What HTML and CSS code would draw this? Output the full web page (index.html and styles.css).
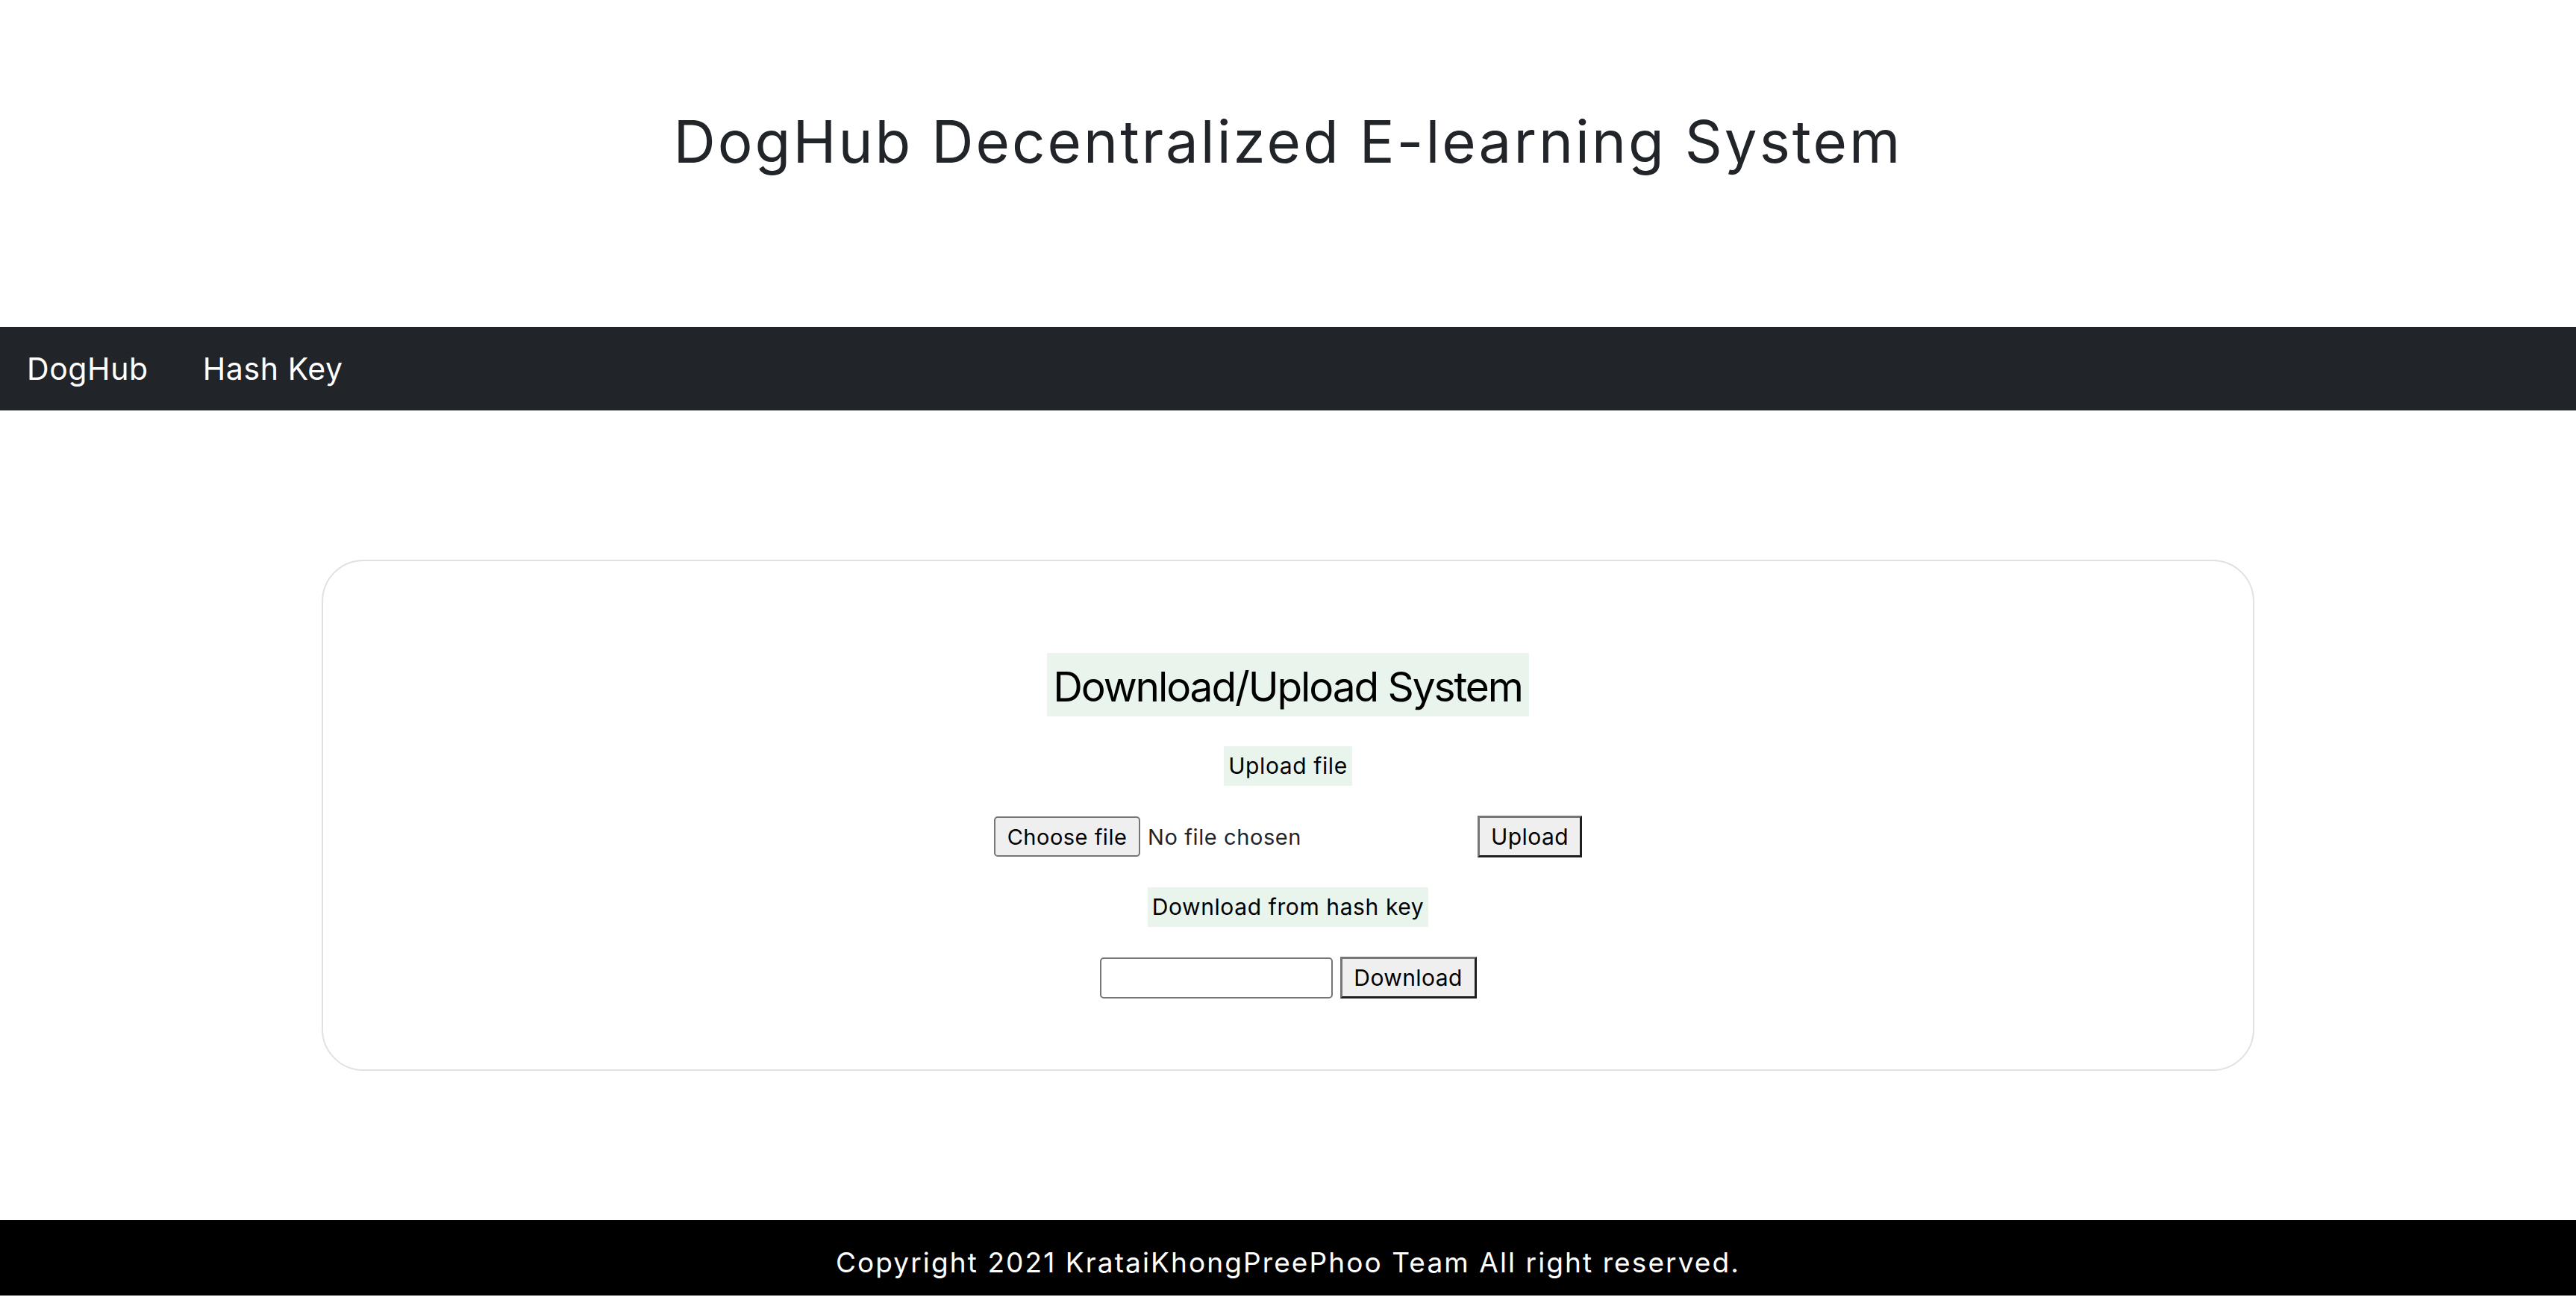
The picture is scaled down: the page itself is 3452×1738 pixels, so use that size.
FILE: index.html
```html
<!DOCTYPE html>
<html lang="en">
<head>
<meta charset="utf-8">
<title>DogHub Decentralized E-learning System</title>
<link rel="stylesheet" href="styles.css">
</head>
<body>
<header class="site-header">
  <h1 class="site-title">DogHub Decentralized E-learning System</h1>
</header>
<nav class="navbar">
  <a class="nav-brand" href="#">DogHub</a>
  <a class="nav-link" href="#">Hash Key</a>
</nav>
<main class="main">
  <section class="card">
    <h2 class="card-title">Download/Upload System</h2>
    <p class="field-label">Upload file</p>
    <div class="upload-row">
      <div class="file-picker">
        <button class="file-btn" type="button">Choose file</button>
        <span class="file-name">No file chosen</span>
      </div>
      <button class="btn-outset btn-upload" type="button">Upload</button>
    </div>
    <p class="field-label">Download from hash key</p>
    <div class="download-row">
      <input class="hash-input" type="text" aria-label="hash key">
      <button class="btn-outset btn-download" type="button">Download</button>
    </div>
  </section>
</main>
<footer class="footer">
  <p class="footer-text">Copyright 2021 KrataiKhongPreePhoo Team All right reserved.</p>
</footer>
</body>
</html>
```
FILE: styles.css
```css
* { box-sizing: border-box; }
html, body { margin: 0; padding: 0; }
body {
  font-family: "Inter", "Noto Sans", sans-serif;
  color: #212529;
  background: #fff;
  width: 3452px;
}
.site-header {
  height: 438px;
  padding-top: 142px;
}
.site-title {
  margin: 0;
  text-align: center;
  font-weight: 400;
  font-size: 78px;
  line-height: 96px;
  letter-spacing: 3px;
  color: #212529;
}
.navbar {
  height: 112px;
  background: #212529;
  display: flex;
  align-items: center;
  padding-left: 36px;
  gap: 73px;
}
.nav-brand, .nav-link {
  color: #fff;
  text-decoration: none;
  font-size: 41px;
  line-height: 60px;
  letter-spacing: 0.6px;
}
.main {
  padding: 200px 0;
}
.card {
  width: 2590px;
  margin: 0 auto;
  border: 2px solid #dee2e6;
  border-radius: 56px;
  padding: 123px 0 95px;
  display: flex;
  flex-direction: column;
  align-items: center;
  gap: 40px;
}
.card-title {
  margin: 0;
  font-weight: 400;
  font-size: 55px;
  line-height: 80px;
  letter-spacing: -2.1px;
  padding: 5px 9px 0 8px;
  background: #e8f4ec;
  color: #000;
}
.field-label {
  margin: 0;
  font-size: 30px;
  line-height: 53px;
  letter-spacing: 0.6px;
  padding: 0 6px;
  background: #e8f4ec;
  color: #000;
}
.upload-row, .download-row {
  display: flex;
  align-items: center;
  justify-content: center;
}
.file-picker {
  width: 640px;
  display: flex;
  align-items: center;
}
.file-btn {
  width: 196px;
  height: 54px;
  border: 2px solid #767676;
  border-radius: 5px;
  background: #efefef;
  font-family: inherit;
  font-size: 29px;
  letter-spacing: 0.5px;
  color: #000;
  padding: 0;
}
.file-name {
  margin-left: 10px;
  font-size: 29px;
  letter-spacing: 0.6px;
  color: #212529;
}
.btn-outset {
  height: 56px;
  border-width: 3px;
  border-style: solid;
  border-color: #767676 #1e1e1e #1e1e1e #767676;
  background: #efefef;
  font-family: inherit;
  font-size: 30px;
  letter-spacing: 0.4px;
  color: #000;
  padding: 0;
}
.btn-upload {
  width: 140px;
  margin-left: 8px;
}
.hash-input {
  width: 312px;
  height: 55px;
  border: 2px solid #767676;
  border-radius: 5px;
  background: #fff;
  font-family: inherit;
  font-size: 30px;
}
.btn-download {
  width: 183px;
  margin-left: 10px;
}
.footer {
  background: #000;
  height: 101px;
  padding-top: 12px;
  display: flex;
  align-items: center;
  justify-content: center;
}
.footer-text {
  margin: 0;
  color: #fff;
  font-size: 37px;
  line-height: 50px;
  letter-spacing: 2.1px;
}
```
